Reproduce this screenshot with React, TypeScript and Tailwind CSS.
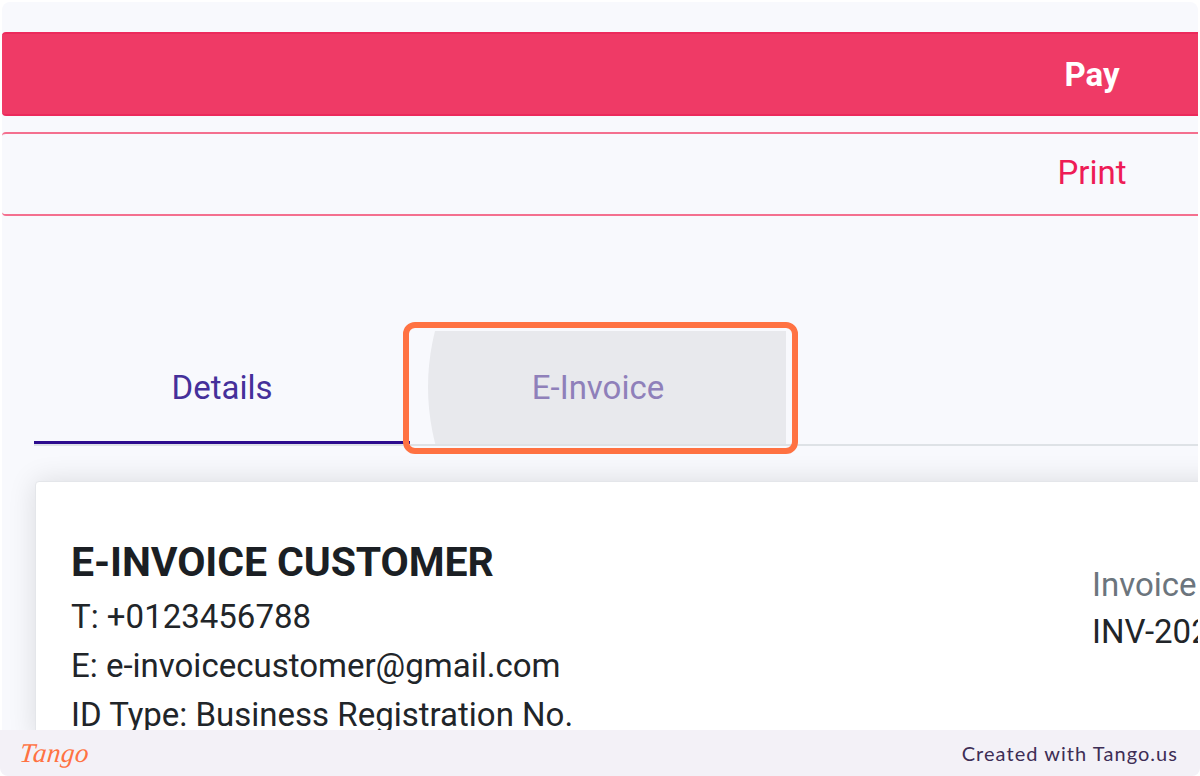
const roboto = "font-['Roboto',sans-serif]";

function InvoiceCard() {
  return (
    <div className="ml-[33px] mt-[35px] flex w-[1500px] rounded border border-[#e4e6ea] bg-white pl-[35px] pt-[53px] text-[33px] leading-[49px] text-[#212529] shadow-[0_0_28px_rgba(0,0,0,0.12)]">
      <div className="w-[1021px]">
        <h1 className="mb-[3px] text-[41px] font-bold leading-[54px] tracking-[-0.1px] text-[#1b1f24]">
          E-INVOICE CUSTOMER
        </h1>
        <p>T: +0123456788</p>
        <p>E: e-invoicecustomer@gmail.com</p>
        <p>ID Type: Business Registration No.</p>
      </div>
      <div className="pt-[26px] leading-[47px]">
        <p className="text-[#6c757d]">Invoice No</p>
        <p>INV-2024-0001</p>
      </div>
    </div>
  );
}

export default function App() {
  return (
    <div className={`relative flex h-[776px] w-[1200px] flex-col overflow-hidden bg-white ${roboto}`}>
      <main className="relative mx-[2px] mt-[2px] min-h-0 flex-1 overflow-hidden rounded-t-lg bg-[#f8f9fd]">
        <div className="w-[2180px] pt-[30px] text-[33px]">
          <button
            type="button"
            className="block h-[84px] w-full rounded border-y-2 border-[#ec2a5c] bg-[#ef3a66] pt-px font-bold text-white"
          >
            Pay
          </button>
          <button
            type="button"
            className="mt-4 block h-[84px] w-full rounded border-y-2 border-[#f4708f] bg-transparent pb-[3px] text-[#ee1c56]"
          >
            Print
          </button>
        </div>

        <div className="mt-[115px] ml-[32px] flex h-[115px] border-b-2 border-[#dee2e6] text-[33px]">
          <div className="flex h-[113px] w-[376px] items-center justify-center border-b-[3px] border-[#2c0c8e] pt-[3px] text-[#45309a]">
            Details
          </div>
          <div className="relative flex h-[113px] w-[376px] items-center justify-center overflow-hidden text-[#8f80ba]">
            <span className="absolute left-[18px] top-[-171px] h-[454px] w-[454px] rounded-full bg-[#e8e9ed]" />
            <span className="relative">E-Invoice</span>
          </div>
        </div>

        <InvoiceCard />

        {/* orange highlight from the recording tool */}
        <div className="absolute left-[401px] top-[320px] h-[132px] w-[395px] rounded-xl border-[6px] border-[#ff7242]" />
      </main>

      <footer className="flex h-[46px] shrink-0 items-center justify-between rounded-b-lg bg-[#f3f1f7] pl-[20px] pr-[22px]">
        <span className="-skew-x-6 font-['Liberation_Serif',serif] text-[27px] italic leading-none tracking-[0.5px] text-[#ff7242]">
          Tango
        </span>
        <span className="font-['Lato',sans-serif] text-[20px] tracking-[1.05px] text-[#3d2d55]">
          Created with Tango.us
        </span>
      </footer>
    </div>
  );
}
